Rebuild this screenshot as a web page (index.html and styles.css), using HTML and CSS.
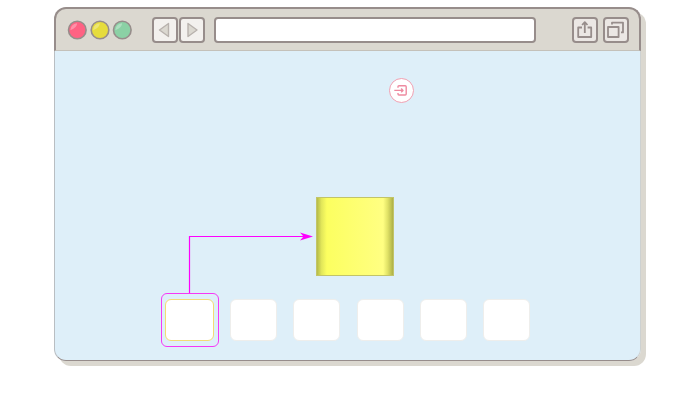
FILE: index.html
```html
<!DOCTYPE html>
<html lang="en">
<head>
<meta charset="utf-8">
<title>Browser window</title>
<link rel="stylesheet" href="styles.css">
</head>
<body>
<main class="window">
  <header class="toolbar">
    <svg class="lights" viewBox="0 0 65 20" aria-hidden="true">
      <g stroke="#978d8b" stroke-width="1.6">
        <circle cx="10.3" cy="10" r="8.8" fill="#ff6283"/>
        <circle cx="33" cy="10" r="8.8" fill="#e6dc3c"/>
        <circle cx="55.3" cy="10" r="8.8" fill="#8bd1a5"/>
      </g>
      <g fill="#fff" fill-opacity=".3">
        <path d="M3.3 10.2Q3.8 4 10 3.2Q10.5 7.4 3.3 10.2Z"/>
        <path d="M26 10.2Q26.5 4 32.7 3.2Q33.2 7.4 26 10.2Z"/>
        <path d="M48.3 10.2Q48.8 4 55 3.2Q55.5 7.4 48.3 10.2Z"/>
      </g>
    </svg>
    <nav class="history">
      <button class="tool" type="button" aria-label="Back">
        <svg viewBox="0 0 22 22"><path d="M5.5 11 14.5 4.5V17.5Z" fill="#dbd8d0" stroke="#b8b2ad" stroke-width="1.4" stroke-linejoin="round"/></svg>
      </button>
      <button class="tool" type="button" aria-label="Forward">
        <svg viewBox="0 0 22 22"><path d="M16 11 7 4.5V17.5Z" fill="#dbd8d0" stroke="#b8b2ad" stroke-width="1.4" stroke-linejoin="round"/></svg>
      </button>
    </nav>
    <input class="address" type="text" aria-label="Address">
    <div class="actions">
      <button class="tool tool-flat" type="button" aria-label="Share">
        <svg viewBox="0 0 22 22" fill="none" stroke="#978d8b" stroke-width="1.8" stroke-linejoin="round"><path d="M8 8.5H4.2V18H17.2V8.5H13.6M10.8 14V3.5M8.1 6 10.8 3.2 13.5 6"/></svg>
      </button>
      <button class="tool tool-flat" type="button" aria-label="Tabs">
        <svg viewBox="0 0 22 22" fill="none" stroke="#978d8b" stroke-width="1.8" stroke-linejoin="round"><path d="M3 8H13.6V18H3ZM7 5.6V3.6H18V13.4H16"/></svg>
      </button>
    </div>
  </header>
  <section class="stage">
    <div class="scene">
      <button class="enter" type="button" aria-label="Enter">
        <svg viewBox="0 0 23 23" fill="none" stroke="#ee8aa0" stroke-width="1.4" stroke-linejoin="round"><path d="M8 8.8V7.6Q8 6.7 9 6.7H15.2Q16.2 6.7 16.2 7.7V15Q16.2 16 15.2 16H9Q8 16 8 15V14M4.3 11.4H12.8M11.2 9.6 13 11.4 11.2 13.2"/></svg>
      </button>
      <div class="box"></div>
      <div class="slots">
        <div class="slot slot-active">
          <div class="selection"></div>
          <svg class="connector" viewBox="0 0 126 64" aria-hidden="true">
            <path d="M1.5 63V6.5H118" fill="none" stroke="#f0f" stroke-width="1.2"/>
            <path d="M125 6.5 112 2.5 115.5 6.5 112 10.5Z" fill="#f0f"/>
          </svg>
        </div>
        <div class="slot"></div>
        <div class="slot"></div>
        <div class="slot"></div>
        <div class="slot"></div>
        <div class="slot"></div>
      </div>
    </div>
  </section>
</main>
</body>
</html>
```
FILE: styles.css
```css
* {
  box-sizing: border-box;
}

body {
  margin: 0;
  padding: 7px 59px 39px 54px;
  background: #fff;
  font-family: "Liberation Sans", sans-serif;
}

.window {
  border-radius: 12px;
  box-shadow: 5px 5px 0 #dbd8d0;
}

.toolbar {
  display: flex;
  align-items: center;
  padding: 8px 10px 7px 11px;
  background: #dbd8d0;
  border: 2px solid #978d8b;
  border-bottom: 1px solid #c4c1ba;
  border-radius: 12px 12px 0 0;
}

.lights {
  width: 65px;
  height: 20px;
  margin-right: 20px;
}

.history {
  display: flex;
  gap: 1px;
}

.actions {
  display: flex;
  gap: 5px;
}

.tool {
  width: 26px;
  height: 26px;
  padding: 0;
  background: #f3f1ee;
  border: 2px solid #978d8b;
  border-radius: 4px;
}

.tool-flat {
  background: #ebe7e4;
}

.tool svg,
.enter svg {
  display: block;
  width: 100%;
  height: 100%;
}

.address {
  flex: 1;
  min-width: 0;
  height: 26px;
  margin: 0 36px 0 9px;
  padding: 0 8px;
  background: #fff;
  border: 2px solid #978d8b;
  border-radius: 4px;
  font: inherit;
}

.stage {
  padding: 27px 0 19px;
  background: #deeff9;
  border: 1px solid #b9bec2;
  border-top: 0;
  border-right-color: #cdd1d1;
  border-bottom-color: #978d8b;
  border-radius: 0 0 12px 12px;
}

.scene {
  width: 366px;
  max-width: 100%;
  margin: 0 auto;
}

.enter {
  display: block;
  width: 25px;
  height: 25px;
  margin-left: 224px;
  padding: 0;
  background: #fff;
  border: 1px solid #f0a0b2;
  border-radius: 50%;
}

.box {
  width: 78px;
  height: 79px;
  margin: 94px 0 23px 151px;
  border: 1px solid #c2c468;
  background: linear-gradient(90deg, #b5bb4a 0, #e2e75a 6%, #fcff60 13%, #ffff82 87%, #e0e266 93%, #adb048 100%);
}

.slots {
  display: flex;
  justify-content: space-between;
}

.slot {
  position: relative;
  width: 47px;
  height: 42px;
  background: #fff;
  border: 1px solid #eeeeec;
  border-radius: 6px;
}

.slot-active {
  width: 49px;
  border-color: #f3dc74;
}

.selection {
  position: absolute;
  inset: -7px -6px -7px -5px;
  border: 1px solid #f638f6;
  border-radius: 6px;
}

.connector {
  position: absolute;
  left: 22px;
  bottom: 46px;
  width: 126px;
  height: 64px;
}
```
